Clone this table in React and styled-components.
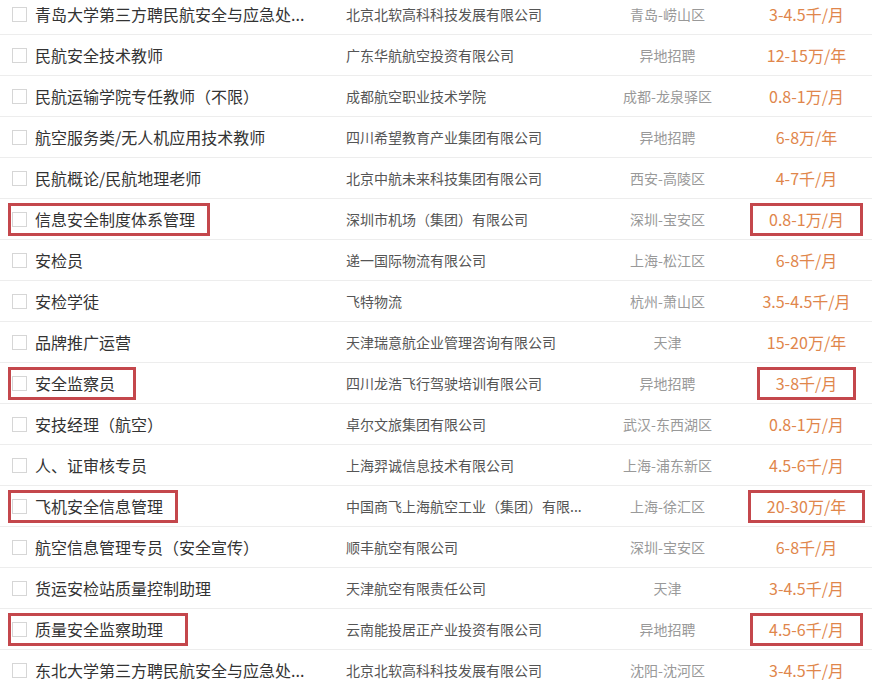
import styled, { createGlobalStyle } from "styled-components";

const GlobalStyle = createGlobalStyle`
  body {
    margin: 0;
    background: #fff;
    font-family: "Noto Sans CJK SC", "Noto Sans", sans-serif;
  }
`;

const jobs = [
  { title: "青岛大学第三方聘民航安全与应急处...", company: "北京北软高科科技发展有限公司", city: "青岛-崂山区", pay: "3-4.5千/月" },
  { title: "民航安全技术教师", company: "广东华航航空投资有限公司", city: "异地招聘", pay: "12-15万/年" },
  { title: "民航运输学院专任教师（不限）", company: "成都航空职业技术学院", city: "成都-龙泉驿区", pay: "0.8-1万/月" },
  { title: "航空服务类/无人机应用技术教师", company: "四川希望教育产业集团有限公司", city: "异地招聘", pay: "6-8万/年" },
  { title: "民航概论/民航地理老师", company: "北京中航未来科技集团有限公司", city: "西安-高陵区", pay: "4-7千/月" },
  { title: "信息安全制度体系管理", company: "深圳市机场（集团）有限公司", city: "深圳-宝安区", pay: "0.8-1万/月", mark: 12 },
  { title: "安检员", company: "递一国际物流有限公司", city: "上海-松江区", pay: "6-8千/月" },
  { title: "安检学徒", company: "飞特物流", city: "杭州-萧山区", pay: "3.5-4.5千/月" },
  { title: "品牌推广运营", company: "天津瑞意航企业管理咨询有限公司", city: "天津", pay: "15-20万/年" },
  { title: "安全监察员", company: "四川龙浩飞行驾驶培训有限公司", city: "异地招聘", pay: "3-8千/月", mark: 18 },
  { title: "安技经理（航空）", company: "卓尔文旅集团有限公司", city: "武汉-东西湖区", pay: "0.8-1万/月" },
  { title: "人、证审核专员", company: "上海羿诚信息技术有限公司", city: "上海-浦东新区", pay: "4.5-6千/月" },
  { title: "飞机安全信息管理", company: "中国商飞上海航空工业（集团）有限...", city: "上海-徐汇区", pay: "20-30万/年", mark: 12 },
  { title: "航空信息管理专员（安全宣传）", company: "顺丰航空有限公司", city: "深圳-宝安区", pay: "6-8千/月" },
  { title: "货运安检站质量控制助理", company: "天津航空有限责任公司", city: "天津", pay: "3-4.5千/月" },
  { title: "质量安全监察助理", company: "云南能投居正产业投资有限公司", city: "异地招聘", pay: "4.5-6千/月", mark: 22 },
  { title: "东北大学第三方聘民航安全与应急处...", company: "北京北软高科科技发展有限公司", city: "沈阳-沈河区", pay: "3-4.5千/月" },
];

export default function App() {
  return (
    <>
      <GlobalStyle />
      <List>
        {jobs.map((job, i) => (
          <Row key={i}>
            <TitleCell>
              <TitleBox $marked={job.mark !== undefined} $pad={job.mark || 0}>
                <Check />
                <Title>{job.title}</Title>
              </TitleBox>
            </TitleCell>
            <Company>{job.company}</Company>
            <City>{job.city}</City>
            <PayCell>
              <Pay $marked={job.mark !== undefined}>{job.pay}</Pay>
            </PayCell>
          </Row>
        ))}
      </List>
    </>
  );
}

const List = styled.div`
  margin-top: -6px;
  width: 872px;
`;

const Row = styled.div`
  display: grid;
  grid-template-columns: 346px 254px 135px 1fr;
  align-items: center;
  height: 41px;
  box-sizing: border-box;
  border-bottom: 1px solid #ededed;
`;

const TitleCell = styled.div`
  display: flex;
  align-items: center;
  padding-left: 8px;
`;

const TitleBox = styled.div`
  display: inline-flex;
  align-items: center;
  gap: 8px;
  height: 33px;
  box-sizing: border-box;
  padding: 0 ${(p) => p.$pad}px 0 1px;
  border: 3px solid ${(p) => (p.$marked ? "#c4474c" : "transparent")};
`;

const Check = styled.span`
  width: 15px;
  height: 15px;
  box-sizing: border-box;
  border: 1px solid #d6d6d6;
  background: #fff;
  flex-shrink: 0;
`;

const Title = styled.span`
  font-size: 16px;
  color: #333;
  white-space: nowrap;
`;

const Company = styled.div`
  font-size: 14px;
  color: #555;
  white-space: nowrap;
`;

const City = styled.div`
  font-size: 14px;
  color: #999;
  text-align: center;
  white-space: nowrap;
`;

const PayCell = styled.div`
  display: flex;
  justify-content: center;
  padding-left: 6px;
`;

const Pay = styled.span`
  display: inline-flex;
  align-items: center;
  height: 33px;
  box-sizing: border-box;
  padding: 0 16px;
  border: 3px solid ${(p) => (p.$marked ? "#c4474c" : "transparent")};
  font-size: 16px;
  color: #e0864b;
  white-space: nowrap;
`;
